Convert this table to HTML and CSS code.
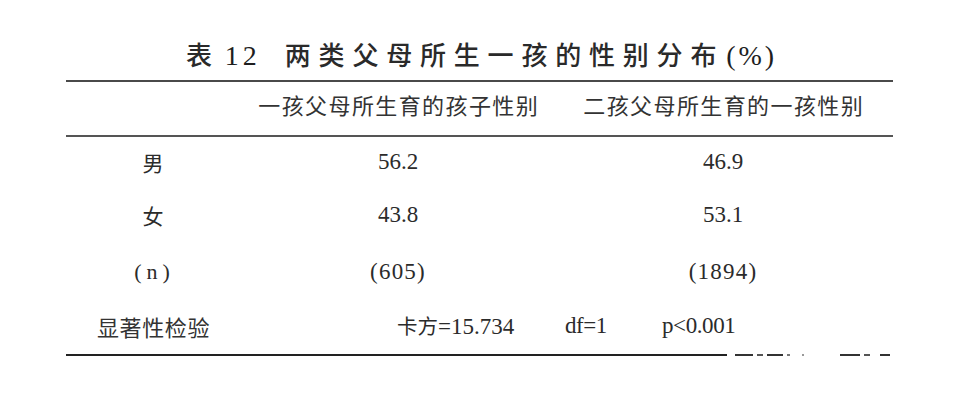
FILE: index.html
```html
<!DOCTYPE html>
<html lang="zh">
<head>
<meta charset="utf-8">
<title>表12 两类父母所生一孩的性别分布</title>
<link rel="stylesheet" href="styles.css">
</head>
<body>
<div class="page">
  <h1 class="title"><span class="t-cjk">表</span><span class="t-num">12</span><span class="t-cjk t-main">两类父母所生一孩的性别分布</span><span class="t-num t-pct">(%)</span></h1>
  <div class="table">
    <div class="rule rule-top"></div>
    <div class="row head">
      <div class="cell"></div>
      <div class="cell c">一孩父母所生育的孩子性别</div>
      <div class="cell c">二孩父母所生育的一孩性别</div>
    </div>
    <div class="rule rule-mid"></div>
    <div class="row body r1">
      <div class="cell lab">男</div>
      <div class="cell num">56.2</div>
      <div class="cell num">46.9</div>
    </div>
    <div class="row body r2">
      <div class="cell lab">女</div>
      <div class="cell num">43.8</div>
      <div class="cell num">53.1</div>
    </div>
    <div class="row body r3">
      <div class="cell lab paren">(n)</div>
      <div class="cell num paren">(605)</div>
      <div class="cell num paren">(1894)</div>
    </div>
    <div class="sig">
      <div class="sig-lab">显著性检验</div>
      <div class="sig-chi"><span class="cjk">卡方</span><span class="lat">=15.734</span></div>
      <div class="sig-df lat">df=1</div>
      <div class="sig-p lat">p&lt;0.001</div>
    </div>
    <div class="rule-bottom">
      <span class="solid"></span>
      <span class="dash d1"></span>
      <span class="dash d2"></span>
      <span class="dash d3"></span>
      <span class="dash d4"></span>
      <span class="dash d5"></span>
      <span class="dash d6"></span>
      <span class="dash d7"></span>
      <span class="dash d8"></span>
    </div>
  </div>
</div>
</body>
</html>
```
FILE: styles.css
```css
html, body {
  margin: 0;
  padding: 0;
  background: #ffffff;
}

body {
  width: 960px;
  height: 410px;
  overflow: hidden;
  color: #2b2b2b;
  font-family: "Liberation Serif", "Noto Sans CJK SC", serif;
}

.page {
  padding-left: 66px;
  width: 827px;
}

.title {
  margin: 39px 0 0 0;
  height: 30px;
  line-height: 30px;
  font-size: 26px;
  font-weight: 500;
  color: #2a2a2a;
  white-space: nowrap;
  padding-left: 120px;
  display: flex;
  align-items: baseline;
}

.t-cjk {
  font-family: "Noto Sans CJK SC", sans-serif;
  letter-spacing: 7.8px;
}

.t-num {
  font-family: "Liberation Serif", serif;
  font-size: 28px;
  font-weight: 400;
  letter-spacing: 4px;
  margin-left: 5px;
  margin-right: 24px;
  color: #1e1e1e;
}

.t-pct {
  margin-left: 2px;
  margin-right: 0;
  letter-spacing: 3px;
}

.table {
  margin-top: 11px;
  width: 827px;
}

.rule {
  height: 0;
}

.rule-top {
  border-top: 2px solid #4a4a4a;
}

.rule-mid {
  border-top: 2px solid #555;
}

.row {
  display: grid;
  grid-template-columns: 172px 320px 330px;
  align-items: center;
}

.cell {
  text-align: center;
}

.head {
  height: 53px;
  align-items: start;
}

.head .cell {
  padding-top: 11px;
  font-family: "Noto Sans CJK SC", sans-serif;
  font-size: 22px;
  line-height: 22px;
  letter-spacing: 1.4px;
  color: #333;
  white-space: nowrap;
  text-indent: 1.4px;
}

.body .lab {
  font-family: "Noto Sans CJK SC", sans-serif;
  font-size: 21px;
  line-height: 22px;
  color: #2b2b2b;
  text-indent: 2px;
}

.body .num {
  font-family: "Liberation Serif", serif;
  font-size: 23px;
  line-height: 22px;
}

.lab.paren {
  font-family: "Liberation Serif", serif;
  font-size: 22px;
  font-weight: 400;
  letter-spacing: 5px;
  text-indent: 5px;
}

.num.paren {
  letter-spacing: 1.2px;
}

.r1 { height: 50px; }
.r2 { height: 56px; }
.r3 { height: 57px; }

.sig {
  height: 52px;
  display: flex;
  align-items: center;
  padding-left: 31px;
}

.sig-lab {
  width: 300px;
  font-family: "Noto Sans CJK SC", sans-serif;
  font-size: 22px;
  line-height: 22px;
  letter-spacing: 0.6px;
  color: #333;
}

.sig-chi {
  width: 168px;
  display: flex;
  align-items: baseline;
  white-space: nowrap;
}

.cjk {
  font-family: "Noto Sans CJK SC", sans-serif;
  font-size: 20.5px;
  line-height: 22px;
}

.lat {
  font-family: "Liberation Serif", serif;
  font-size: 23px;
  line-height: 22px;
}

.sig-df {
  width: 97px;
  letter-spacing: -0.5px;
}

.sig-p {
  letter-spacing: -0.4px;
}

.rule-bottom {
  margin-top: 2px;
  height: 4px;
  display: flex;
  align-items: flex-start;
}

.solid {
  width: 661px;
  height: 2px;
  background: #222;
}

.dash {
  height: 2px;
  background: #333;
}

.d1 { margin-left: 8px; width: 18px; }
.d2 { margin-left: 4px; width: 6px; background: #555; }
.d3 { margin-left: 4px; width: 16px; }
.d4 { margin-left: 4px; width: 3px; background: #777; }
.d5 { margin-left: 12px; width: 2px; background: #999; }
.d6 { margin-left: 36px; width: 20px; }
.d7 { margin-left: 4px; width: 6px; background: #555; }
.d8 { margin-left: 10px; width: 10px; }
```
